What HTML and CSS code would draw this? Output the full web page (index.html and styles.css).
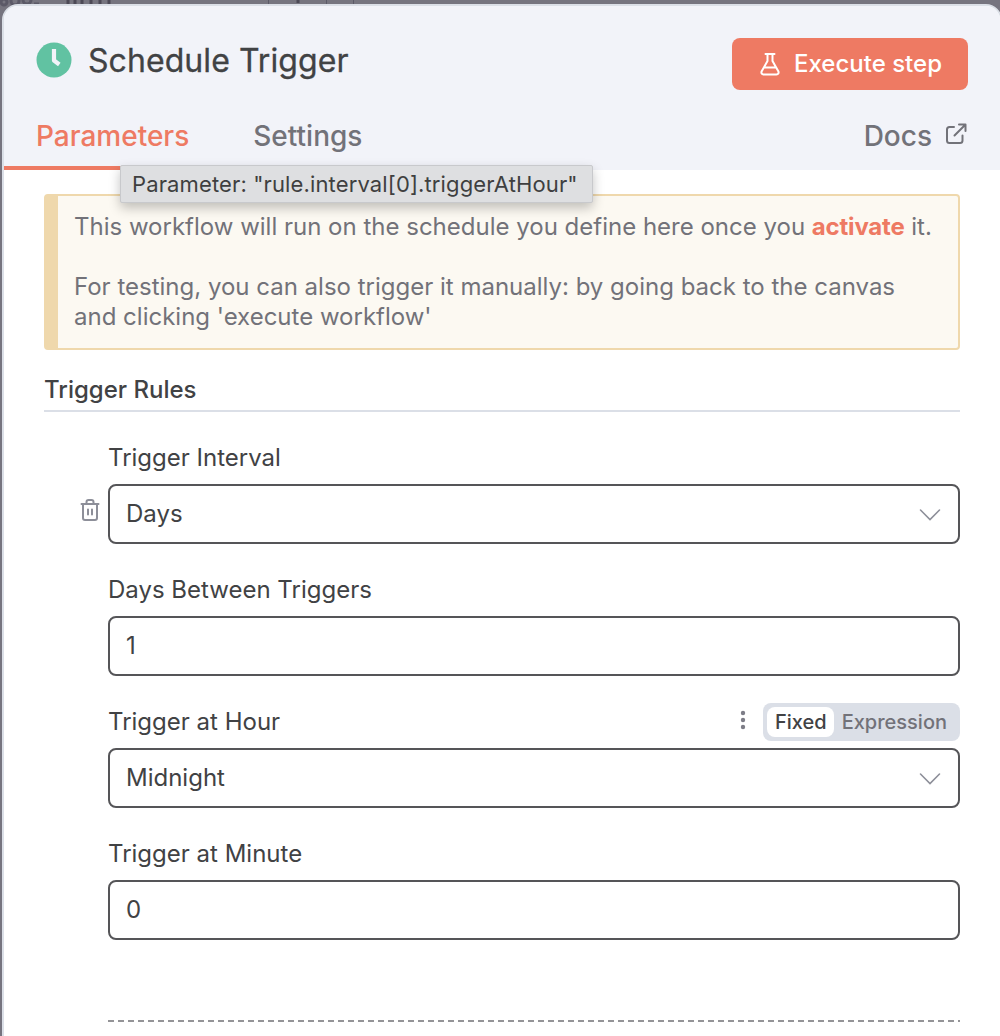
FILE: index.html
```html
<!DOCTYPE html>
<html lang="en">
<head>
<meta charset="utf-8">
<title>Schedule Trigger</title>
<link rel="stylesheet" href="styles.css">
</head>
<body>
<div class="backdrop" aria-hidden="true">
  <svg class="backdrop-art" width="400" height="12" viewBox="0 0 400 12" fill="none" stroke="#5b5967" stroke-width="3">
    <circle cx="4" cy="2" r="3"/><circle cx="15" cy="1" r="4"/><circle cx="27" cy="0" r="4"/><path d="M34 4h5"/>
    <path stroke="#4c4956" d="M68 0v4M75 0v4M82 0v4M91 0v4M100 0v4M109 0v4"/>
    <path stroke-width="1" d="M268.500 0v4M326.500 0v4M353.500 0v4"/><path stroke="#4c4956" d="M298 0v3"/>
  </svg>
</div>
<main class="panel">
  <header class="header">
    <div class="title-row">
      <svg class="clock" width="36" height="36" viewBox="0 0 36 36"><circle cx="18" cy="18" r="17.500" fill="#61c2a2"/><path d="M18 7v11.500l5.300 4" fill="none" stroke="#f2f3f9" stroke-width="4.200" stroke-linejoin="round"/></svg>
      <h1 class="title">Schedule Trigger</h1>
      <button class="execute">
        <svg width="20" height="24" viewBox="0 0 20 24" fill="none" stroke="#fff" stroke-width="2" stroke-linejoin="round" stroke-linecap="round"><path d="M5.500 2h9M7.500 2v7L1.700 19.300c-.8 1.700.1 3.200 1.800 3.200h13c1.700 0 2.600-1.500 1.800-3.200L12.500 9V2M5 15.500h10"/></svg>
        <span>Execute step</span>
      </button>
    </div>
    <nav class="tabs">
      <a class="tab active">Parameters</a>
      <a class="tab settings">Settings</a>
      <a class="tab docs"><span>Docs</span><svg width="22" height="22" viewBox="0 0 22 22" fill="none" stroke="#727279" stroke-width="2" stroke-linejoin="round" stroke-linecap="round"><path d="M9 4H4.500A2.500 2.500 0 0 0 2 6.500v11A2.500 2.500 0 0 0 4.500 20h10.500a2.500 2.500 0 0 0 2.500-2.500V12.500M14 1.500h6.500V8M20.500 1.500L9.500 12.500"/></svg></a>
    </nav>
  </header>
  <section class="content">
    <div class="notice">
      <p class="notice-first">This workflow will run on the schedule you define here once you <b>activate</b> it.</p>
      <p class="notice-second">For testing, you can also trigger it manually: by going back to the canvas<br>and clicking 'execute workflow'</p>
    </div>
    <h2 class="section-title">Trigger Rules</h2>
    <div class="rules">
      <div class="field">
        <div class="label-row"><label>Trigger Interval</label></div>
        <div class="input-row">
          <svg class="trash" width="20" height="24" viewBox="0 0 20 24" fill="none" stroke="#8d8f99" stroke-width="2" stroke-linecap="round" stroke-linejoin="round"><path d="M1.500 6h17M3 6v14a2 2 0 0 0 2 2h10a2 2 0 0 0 2-2V6M6.500 6V4a2 2 0 0 1 2-2h3a2 2 0 0 1 2 2v2M8 11.500v5M12 11.500v5"/></svg>
          <div class="input"><span>Days</span><svg class="chevron" width="22" height="14" viewBox="0 0 22 14" fill="none" stroke="#8d8f99" stroke-width="1.600" stroke-linecap="round"><path d="M1.500 2L11 11.500 20.500 2"/></svg></div>
        </div>
      </div>
      <div class="field">
        <div class="label-row"><label>Days Between Triggers</label></div>
        <div class="input"><span>1</span></div>
      </div>
      <div class="field">
        <div class="label-row">
          <label>Trigger at Hour</label>
          <svg class="dots" width="6" height="20" viewBox="0 0 6 20" fill="#7d7d87"><circle cx="3" cy="3" r="2.200"/><circle cx="3" cy="10" r="2.200"/><circle cx="3" cy="17" r="2.200"/></svg>
          <div class="switch"><span class="option selected">Fixed</span><span class="option">Expression</span></div>
        </div>
        <div class="input"><span>Midnight</span><svg class="chevron" width="22" height="14" viewBox="0 0 22 14" fill="none" stroke="#8d8f99" stroke-width="1.600" stroke-linecap="round"><path d="M1.500 2L11 11.500 20.500 2"/></svg></div>
      </div>
      <div class="field">
        <div class="label-row"><label>Trigger at Minute</label></div>
        <div class="input"><span>0</span></div>
      </div>
      <div class="divider"></div>
    </div>
  </section>
</main>
<div class="tooltip">Parameter: "rule.interval[0].triggerAtHour"</div>
</body>
</html>
```

FILE: styles.css
```css
* { box-sizing: border-box; }
body {
  margin: 0;
  height: 1036px;
  padding: 4px 0 0 2px;
  overflow: hidden;
  position: relative;
  background: #76747f;
  font-family: Inter, "Liberation Sans", sans-serif;
  color: #414244;
}
h1, h2, p { margin: 0; }
.backdrop { position: absolute; left: 0; top: 0; }
.backdrop-art { display: block; }
.panel {
  position: relative;
  width: 1000px;
  height: 1060px;
  border: 2px solid #dbdfe7;
  border-radius: 16px;
  background: #fff;
  overflow: hidden;
}
.header {
  height: 164px;
  background: #f2f3f9;
  display: flex;
  flex-direction: column;
  justify-content: space-between;
}
.title-row {
  display: flex;
  align-items: center;
  padding: 32px 32px 0;
}
.clock { margin: -8px 16px 0 0; }
.title {
  flex: 1;
  margin-top: -6px;
  font-size: 32px;
  line-height: 40px;
  font-weight: 400;
  letter-spacing: .07px;
  -webkit-text-stroke: .3px #414244;
  white-space: nowrap;
}
.execute {
  width: 236px;
  height: 52px;
  border: 0;
  border-radius: 8px;
  background: #ee7a63;
  color: #fff;
  display: flex;
  align-items: center;
  justify-content: center;
  gap: 14px;
  padding: 0 0 0 2px;
  font: 500 24px/30px Inter, sans-serif;
}
.tabs { display: flex; height: 68px; }
.tab {
  padding: 14px 32px 0;
  font-size: 28px;
  line-height: 40px;
  font-weight: 500;
  color: #727279;
}
.tab.active { color: #ee7a63; border-bottom: 4px solid #ee7a63; }
.tab.docs { margin-left: auto; display: flex; gap: 13px; padding-right: 33px; }
.docs svg { margin-top: 7px; }
.content { padding: 24px 40px 0; }
.notice {
  height: 156px;
  border: 2px solid #efd8ac;
  border-left-width: 14px;
  border-radius: 4px;
  background: #fcf9f2;
  color: #727279;
  padding: 16px 16px 0;
  font-size: 24px;
  line-height: 30px;
  white-space: nowrap;
}
.notice b { color: #ee7a63; font-weight: 700; letter-spacing: -.2px; }
.notice-second { margin-top: 30px; }
.section-title {
  margin-top: 20px;
  height: 42px;
  border-bottom: 2px solid #dbdfe7;
  font-size: 24px;
  line-height: 40px;
  font-weight: 500;
}
.rules { padding: 26px 0 0 64px; }
.field { margin-bottom: 26px; }
.label-row {
  display: flex;
  align-items: center;
  height: 46px;
  padding-bottom: 6px;
  font-size: 24px;
}
.label-row label { padding-bottom: 2px; }
.dots { margin-left: auto; margin-right: 17px; margin-top: -5px; }
.switch {
  display: flex;
  width: 197px;
  height: 38px;
  padding: 4px;
  border-radius: 8px;
  background: #dbdfe7;
  color: #727279;
  font-size: 20px;
  line-height: 30px;
  font-weight: 500;
}
.option { padding: 0 8px; border-radius: 8px; }
.option.selected { padding-right: 7px; background: #fff; color: #414244; }
.input-row { display: flex; margin-left: -28px; }
.input-row .input { flex: 1; }
.trash { margin: 14px 8px 0 0; }
.input {
  height: 60px;
  border: 2px solid #555558;
  border-radius: 8px;
  display: flex;
  align-items: center;
  justify-content: space-between;
  padding: 0 17px 2px 16px;
  font-size: 24px;
}
.chevron { margin-top: 3px; }
.divider {
  margin-top: 80px;
  height: 2px;
  background: repeating-linear-gradient(90deg, #949497 0 6px, transparent 6px 10px);
}
.tooltip {
  position: absolute;
  left: 120px;
  top: 165px;
  width: 473px;
  height: 38px;
  padding: 0 11px;
  background: #dedfe1;
  border: 1px solid #c8c9cc;
  border-radius: 2px;
  box-shadow: 0 5px 12px rgba(0, 0, 0, .24);
  color: #3f3f40;
  font-size: 22px;
  line-height: 37px;
  letter-spacing: .13px;
  white-space: nowrap;
}
```
